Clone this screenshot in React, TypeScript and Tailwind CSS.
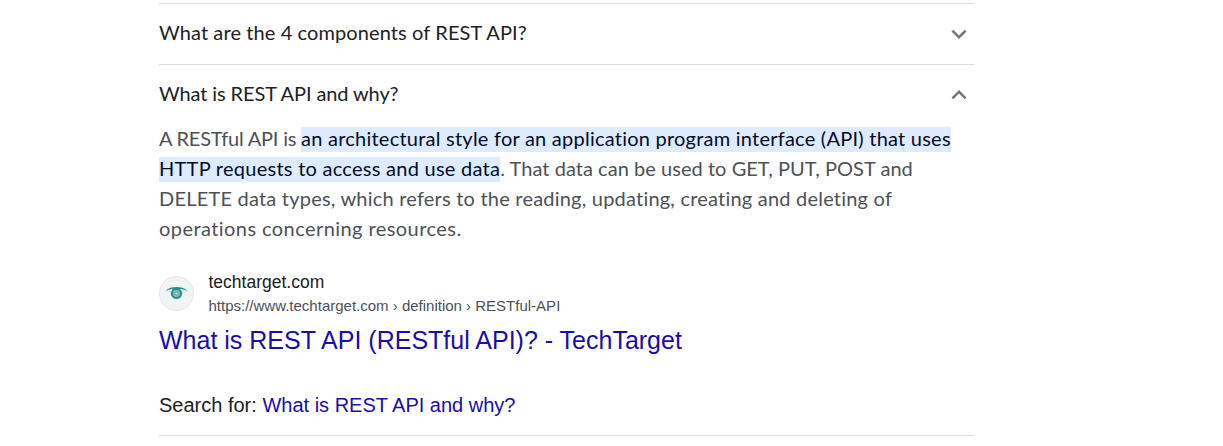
import React from "react";

function Chevron({ up = false }: { up?: boolean }) {
  return (
    <svg width="30" height="30" viewBox="0 0 24 24" fill="#70757a" className="shrink-0">
      {up ? (
        <path d="M12 8l-6 6 1.41 1.41L12 10.83l4.59 4.58L18 14z" />
      ) : (
        <path d="M16.59 8.59L12 13.17 7.41 8.59 6 10l6 6 6-6z" />
      )}
    </svg>
  );
}

function Question({ text, up, tracking }: { text: string; up?: boolean; tracking: string }) {
  return (
    <button className="flex h-[60px] w-full items-center justify-between text-left">
      <span className={"pb-1 font-['Lato',sans-serif] text-[20px] leading-[30px] text-[#202124] " + tracking}>{text}</span>
      <Chevron up={up} />
    </button>
  );
}

function SiteIcon() {
  return (
    <div className="flex size-[35px] shrink-0 items-center justify-center rounded-full border border-[#e6e8eb] bg-[#f1f3f4]">
      <svg width="23" height="23" viewBox="0 0 23 23" fill="none">
        <path d="M0.3 9.2C3.5 5.8 7.2 5 11.5 5S19.500 5.800 22.700 9.200C19.800 7.700 17.200 7 11.500 7S3.200 7.700 0.300 9.200Z" fill="#2a8f8c" />
        <path d="M4.500 8C5.400 11.500 6.500 13.500 8.500 14.800M18.500 8C17.600 11.500 16.500 13.500 14.500 14.800" stroke="#a5d0ce" strokeWidth="0.8" />
        <circle cx="11.500" cy="11.500" r="4.500" fill="#8dc3c1" stroke="#2a8f8c" strokeWidth="2.200" />
        <circle cx="11.500" cy="11.500" r="1.600" fill="#d5e9e9" stroke="#3f9b98" strokeWidth="1" />
      </svg>
    </div>
  );
}

export default function App() {
  return (
    <main className="h-[446px] w-full overflow-hidden bg-white pl-[159px] pt-[3px] font-['Liberation_Sans',Arial,sans-serif]">
      <div className="w-[815px]">
        <section className="border-t border-[#dadce0]">
          <Question text="What are the 4 components of REST API?" tracking="tracking-[0.1px]" />
        </section>
        <section className="h-[372px] border-y border-[#dadce0]">
          <Question text="What is REST API and why?" up tracking="tracking-[-0.11px]" />
          <p className="-mt-[2px] whitespace-nowrap font-['Lato',sans-serif] text-[20px] leading-[30px] text-[#4d5156] [font-variant-ligatures:none]">
            <span className="tracking-[-0.22px]">A RESTful API is </span>
            <mark className="bg-transparent bg-[linear-gradient(transparent_1px,#deebff_1px)] pb-[2px] text-[#040c28] tracking-[0.235px]">an architectural style for an application program interface (API) that uses</mark>
            <br />
            <mark className="bg-transparent bg-[linear-gradient(transparent_1px,#deebff_1px)] pb-[2px] text-[#040c28] tracking-[0.265px]">HTTP requests to access and use data</mark>
            <span className="tracking-[0.04px]">. That data can be used to GET, PUT, POST and</span>
            <br />
            <span className="tracking-[0.21px]">DELETE data types, which refers to the reading, updating, creating and deleting of</span>
            <br />
            <span className="tracking-[0.43px]">operations concerning resources.</span>
          </p>
          <a className="mt-[27px] flex items-center">
            <SiteIcon />
            <span className="ml-[14.5px] flex flex-col whitespace-nowrap">
              <span className="text-[17.5px] leading-[25px] text-[#202124]">techtarget.com</span>
              <span className="text-[15px] leading-[22px] text-[#4d5156]">https://www.techtarget.com › definition › RESTful-API</span>
            </span>
          </a>
          <h3 className="mt-[7px] text-[25px] leading-[33px] text-[#1a0dab]">What is REST API (RESTful API)? - TechTarget</h3>
          <div className="mt-[33px] text-[20px] leading-[30px] text-[#202124]">
            Search for: <a className="text-[#1a0dab]">What is REST API and why?</a>
          </div>
        </section>
      </div>
    </main>
  );
}
